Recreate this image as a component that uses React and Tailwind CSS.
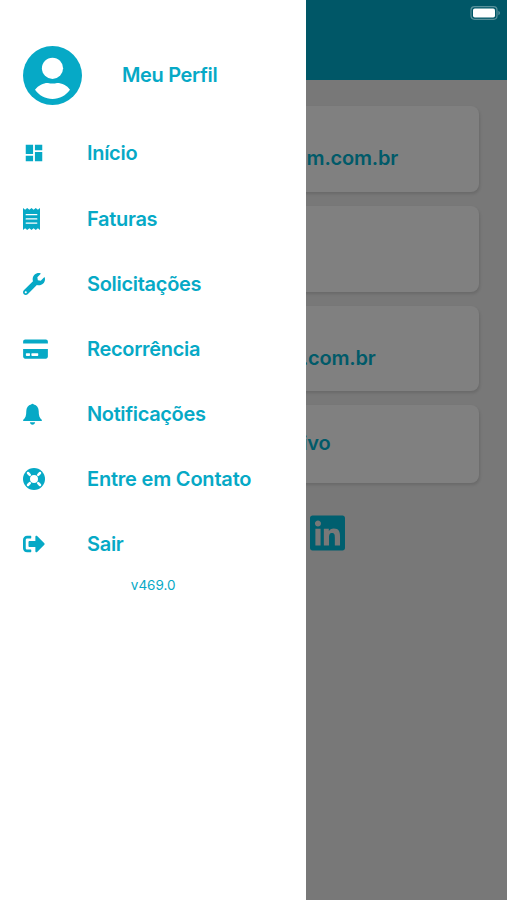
import { FaWrench, FaCreditCard, FaSignOutAlt, FaLinkedin } from 'react-icons/fa';
import { MdDashboard } from 'react-icons/md';

function ReceiptIcon() {
  return (
    <svg className="h-[22px] w-[17px]" viewBox="0 0 17 22" aria-hidden="true">
      <path d="M0 0 2.100 1.700 4.200 0 6.400 1.700 8.500 0l2.100 1.700L12.800 0l2.100 1.700L17 0v22l-2.100-1.700-2.100 1.700-2.200-1.700L8.500 22l-2.100-1.700L4.200 22l-2.100-1.700L0 22z" fill="currentColor" />
      <path d="M3.200 6.700h10.600M3.200 10.900h10.600M3.200 15.100h10.600" stroke="#fff" strokeWidth="1.300" strokeLinecap="round" />
    </svg>
  );
}

function BellIcon() {
  return (
    <svg className="h-[22px] w-[19px]" viewBox="0 0 19 22" fill="currentColor" aria-hidden="true">
      <path d="M8.200 1.600a1.400 1.400 0 0 1 2.600 0c3 .7 4.900 3.200 4.900 6.400 0 4.500.8 7 3 8.700.7.600.300 1.300-.500 1.300H.8c-.8 0-1.200-.7-.5-1.300 2.200-1.700 3-4.200 3-8.700 0-3.200 1.900-5.700 4.900-6.400z" />
      <path d="M6.900 19.300h5.200c-.2 1.500-1.200 2.400-2.600 2.400s-2.400-.9-2.600-2.400z" />
    </svg>
  );
}

function LifeRingIcon() {
  return (
    <svg className="size-[22px]" viewBox="0 0 22 22" fill="none" aria-hidden="true">
      <circle cx="11" cy="11" r="11" fill="currentColor" />
      <circle cx="11" cy="11" r="4" fill="#fff" />
      <path d="m5 5 1.800 1.800M17 5l-1.800 1.800M5 17l1.800-1.800M17 17l-1.800-1.800" stroke="#fff" strokeWidth="2.500" strokeLinecap="round" />
    </svg>
  );
}

function ProfileIcon() {
  return (
    <svg className="size-[59px]" viewBox="0 0 59 59" fill="none" aria-hidden="true">
      <circle cx="29.5" cy="29.5" r="29.5" fill="currentColor" />
      <circle cx="29.5" cy="22.3" r="10.6" fill="#fff" />
      <path d="M12 43.800C15.500 39 21 36.800 25 37q4.500 1 9 0c5 0 10 2.200 13 6.800C43 49.500 36.500 53 29.500 53S16 49.500 12 43.800z" fill="#fff" />
    </svg>
  );
}

const items = [
  { label: 'Início', icon: <MdDashboard className="size-[22px]" />, spacing: 'tracking-[-0.3px]' },
  { label: 'Faturas', icon: <ReceiptIcon />, spacing: 'tracking-[-0.3px]' },
  { label: 'Solicitações', icon: <FaWrench className="size-[22px]" />, spacing: 'tracking-[-0.3px]' },
  { label: 'Recorrência', icon: <FaCreditCard className="h-[22px] w-[25px]" />, spacing: 'tracking-[-0.3px]' },
  { label: 'Notificações', icon: <BellIcon />, spacing: 'tracking-[-0.35px]' },
  { label: 'Entre em Contato', icon: <LifeRingIcon />, spacing: 'tracking-[-0.2px]' },
  { label: 'Sair', icon: <FaSignOutAlt className="size-[22px]" />, spacing: 'tracking-[-0.3px]' },
];

function Card({ children, className }) {
  return (
    <div className={`flex justify-end rounded-lg bg-[#808080] text-[20px] leading-6 font-semibold tracking-[-0.2px] text-[#005a69] shadow-[1px_2px_3px_rgba(0,0,0,0.12)] ${className}`}>
      {children}
    </div>
  );
}

export default function App() {
  return (
    <div className="relative h-[900px] w-[507px] overflow-hidden bg-[#787878] font-['Inter','Liberation_Sans',sans-serif]">
      <header className="flex h-20 justify-end bg-[#005767] pt-[6px] pr-[6px]">
        <svg className="h-[14px] w-[31px]" viewBox="0 0 31 14" aria-label="Bateria">
          <rect x="1" y="0.7" width="26" height="12.6" rx="3.5" fill="none" stroke="#58919b" strokeWidth="1.2" />
          <rect x="3" y="2.4" width="22" height="9.2" rx="1.8" fill="#fff" />
          <path d="M28.4 4.8q1.6.7 1.6 2.2t-1.6 2.2z" fill="#58919b" />
        </svg>
      </header>
      <main className="flex flex-col gap-[14px] px-7 pt-[26px]">
        <Card className="h-[86px] pt-10 pr-[81px]">m.com.br</Card>
        <Card className="h-[86px]" />
        <Card className="h-[85px] pt-10 pr-[103.5px]">.com.br</Card>
        <Card className="h-[78px] pt-[26px] pr-[148.5px]">ivo</Card>
        <div className="mt-[16px] flex pl-[282px]">
          <FaLinkedin className="h-10 w-[35px] text-[#005f6f]" />
        </div>
      </main>
      <aside className="absolute inset-y-0 left-0 w-[306.4px] bg-white text-[#06a9c6]">
        <div className="flex h-[120.8px] items-center pt-[30px] pl-[23px]">
          <ProfileIcon />
          <span className="ml-[40px] text-[20px] leading-6 font-semibold tracking-[-0.35px]">Meu Perfil</span>
        </div>
        <nav>
          {items.map(({ label, icon, spacing }) => (
            <div key={label} className="flex h-[65.17px] items-center pl-[23px]">
              <span className="w-16">{icon}</span>
              <span className={`text-[20px] leading-6 font-semibold ${spacing}`}>{label}</span>
            </div>
          ))}
        </nav>
        <p className="text-center text-[13.5px] leading-4">v469.0</p>
      </aside>
    </div>
  );
}
